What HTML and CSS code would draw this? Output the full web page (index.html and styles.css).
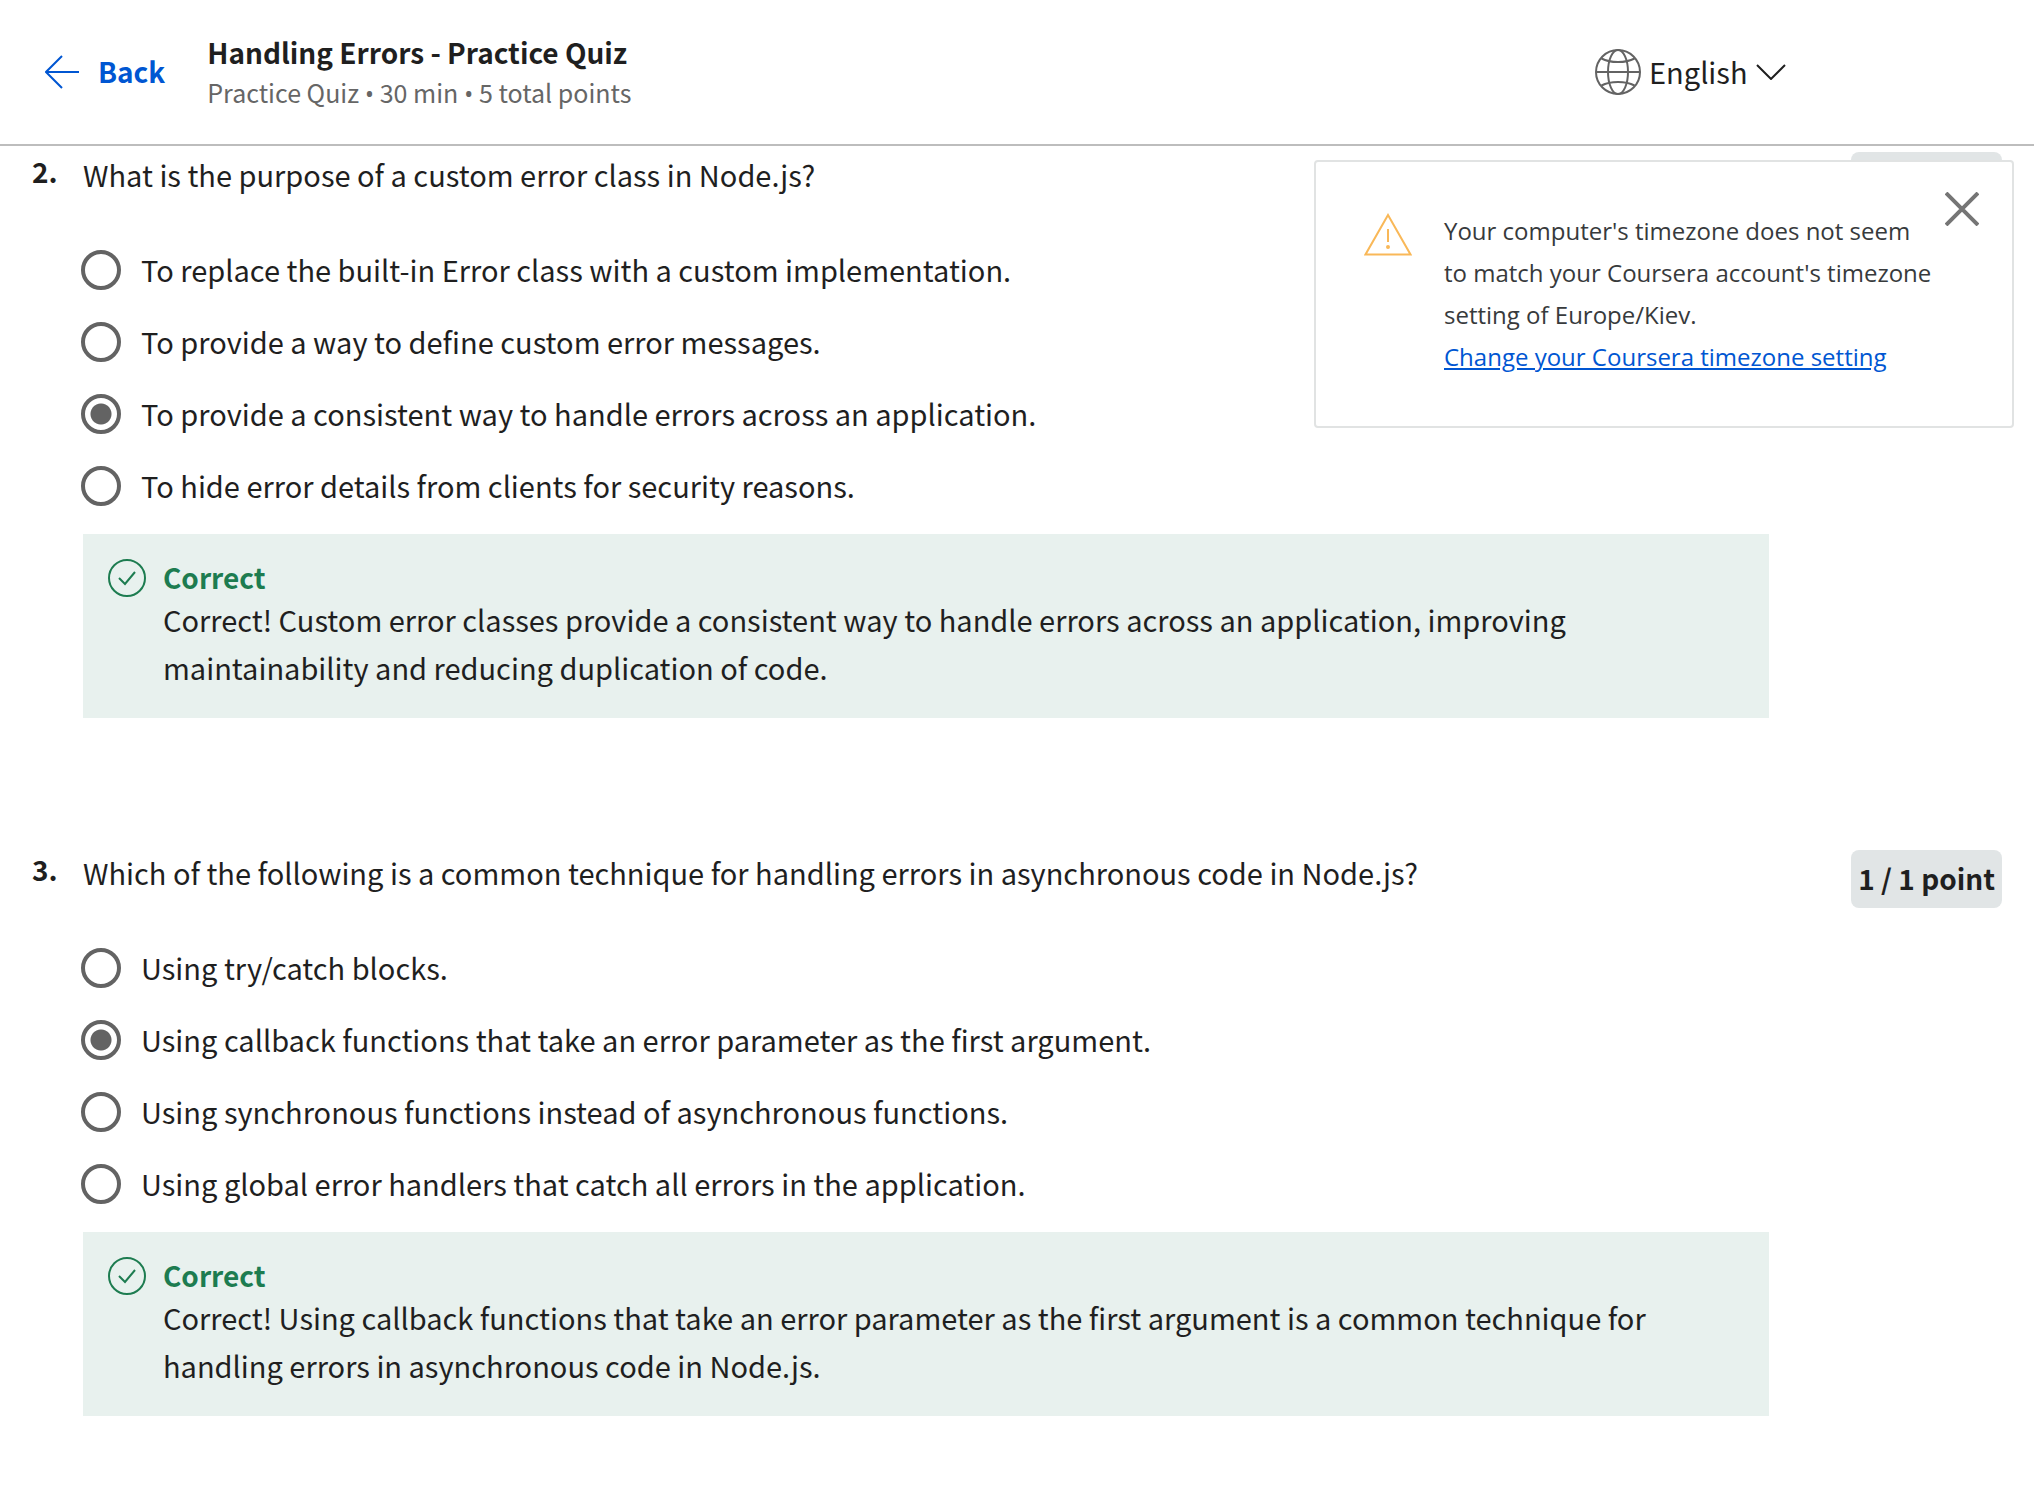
FILE: index.html
```html
<!DOCTYPE html>
<html lang="en">
<head>
  <meta charset="utf-8">
  <meta name="viewport" content="width=device-width, initial-scale=1">
  <title>Handling Errors - Practice Quiz</title>
  <link rel="stylesheet" href="styles.css">
</head>
<body>
  <header class="header">
    <a class="back" href="#">
      <svg class="back-icon" viewBox="0 0 34 34" aria-hidden="true"><path d="M34 17H1M17 1 1 17l16 16"/></svg>
      <span class="back-label">Back</span>
    </a>
    <div class="heading">
      <h1 class="title">Handling Errors - Practice Quiz</h1>
      <p class="subtitle">Practice Quiz <span class="dot">•</span> 30 min <span class="dot">•</span> 5 total points</p>
    </div>
    <label class="language">
      <svg class="globe-icon" viewBox="0 0 46 46" role="img" aria-label="Language">
        <circle cx="23" cy="23" r="22"/>
        <ellipse cx="23" cy="23" rx="10" ry="22"/>
        <path d="M1 23h44M6.500 9.500Q13 13 23 13t16.500-3.500M6.500 36.500Q13 33 23 33t16.500 3.500"/>
      </svg>
      <select class="language-select"><option>English</option></select>
      <svg class="chevron-icon" viewBox="0 0 30 16" aria-hidden="true"><path d="m1 1 14 14L29 1"/></svg>
    </label>
  </header>

  <aside class="notice">
    <svg class="warning-icon" viewBox="0 0 48 43" aria-hidden="true">
      <path d="M24 2 1.500 41.500h45z"/><path d="M24 16v13"/><circle cx="24" cy="34" r="1"/>
    </svg>
    <p class="notice-text">Your computer's timezone does not seem to match your Coursera account's timezone setting of Europe/Kiev.<br><a class="notice-link" href="#">Change your Coursera timezone setting</a></p>
    <button class="notice-close" type="button" aria-label="Close">
      <svg class="close-icon" viewBox="0 0 34 34" aria-hidden="true"><path d="m1 1 32 32M33 1 1 33"/></svg>
    </button>
  </aside>

  <main class="quiz">
    <section class="question">
      <span class="number">2.</span>
      <div class="body">
        <h2 class="prompt" id="q2">What is the purpose of a custom error class in Node.js?</h2>
        <div class="options" role="radiogroup" aria-labelledby="q2">
          <label class="option"><input class="radio" type="radio" name="q2"><span class="answer">To replace the built-in Error class with a custom implementation.</span></label>
          <label class="option"><input class="radio" type="radio" name="q2"><span class="answer">To provide a way to define custom error messages.</span></label>
          <label class="option"><input class="radio" type="radio" name="q2" checked><span class="answer">To provide a consistent way to handle errors across an application.</span></label>
          <label class="option"><input class="radio" type="radio" name="q2"><span class="answer">To hide error details from clients for security reasons.</span></label>
        </div>
        <div class="feedback">
          <svg class="check-icon" viewBox="0 0 38 38" aria-hidden="true"><circle cx="19" cy="19" r="18"/><path d="m11 19 6 6 10-12"/></svg>
          <div>
            <h3 class="verdict">Correct</h3>
            <p class="explanation">Correct! Custom error classes provide a consistent way to handle errors across an application, improving maintainability and reducing duplication of code.</p>
          </div>
        </div>
      </div>
      <span class="points">1 / 1 point</span>
    </section>

    <section class="question">
      <span class="number">3.</span>
      <div class="body">
        <h2 class="prompt" id="q3">Which of the following is a common technique for handling errors in asynchronous code in Node.js?</h2>
        <div class="options" role="radiogroup" aria-labelledby="q3">
          <label class="option"><input class="radio" type="radio" name="q3"><span class="answer">Using try/catch blocks.</span></label>
          <label class="option"><input class="radio" type="radio" name="q3" checked><span class="answer">Using callback functions that take an error parameter as the first argument.</span></label>
          <label class="option"><input class="radio" type="radio" name="q3"><span class="answer">Using synchronous functions instead of asynchronous functions.</span></label>
          <label class="option"><input class="radio" type="radio" name="q3"><span class="answer">Using global error handlers that catch all errors in the application.</span></label>
        </div>
        <div class="feedback">
          <svg class="check-icon" viewBox="0 0 38 38" aria-hidden="true"><circle cx="19" cy="19" r="18"/><path d="m11 19 6 6 10-12"/></svg>
          <div>
            <h3 class="verdict">Correct</h3>
            <p class="explanation">Correct! Using callback functions that take an error parameter as the first argument is a common technique for handling errors in asynchronous code in Node.js.</p>
          </div>
        </div>
      </div>
      <span class="points">1 / 1 point</span>
    </section>
  </main>
</body>
</html>
```

FILE: styles.css
```css
* {
  box-sizing: border-box;
}

body {
  margin: 0;
  background: #fff;
  color: #1f1f1f;
  font-family: "Noto Sans CJK SC", "Noto Sans", sans-serif;
  font-size: 29px;
  line-height: 48px;
}

h1, h2, h3, p {
  margin: 0;
}

svg {
  flex: none;
  fill: none;
  stroke: currentColor;
  stroke-width: 2;
}

/* Header */
.header {
  display: flex;
  align-items: center;
  padding: 32px 248px 32px 45px;
  border-bottom: 2px solid #bdbdbd;
}

.back {
  display: flex;
  align-items: center;
  gap: 19px;
  color: #0056d2;
  font-size: 28px;
  font-weight: 600;
  text-decoration: none;
}

.back-label {
  padding-bottom: 2px;
}

.back-icon {
  width: 34px;
  height: 34px;
}

.heading {
  margin-left: 42px;
}

.title {
  font-size: 28px;
  font-weight: 600;
  line-height: 40px;
}

.subtitle {
  color: #666;
  font-size: 25px;
  line-height: 40px;
}

.dot {
  font-family: "Open Sans", "Noto Sans", sans-serif;
  line-height: 1;
}

.language {
  display: flex;
  align-items: center;
  margin-left: auto;
}

.globe-icon {
  width: 46px;
  height: 46px;
  margin-right: 8px;
  color: #636363;
}

.language-select {
  appearance: none;
  padding: 0 0 2px;
  border: 0;
  background: none;
  color: inherit;
  font: inherit;
}

.chevron-icon {
  width: 30px;
  height: 16px;
  margin-left: 8px;
}

/* Timezone notice */
.notice {
  position: absolute;
  top: 160px;
  right: 20px;
  display: flex;
  align-items: flex-start;
  width: 700px;
  padding: 48px 33px 48px 48px;
  border: 2px solid #e1e3e3;
  border-radius: 4px;
  background: #fff;
}

.warning-icon {
  width: 48px;
  height: 43px;
  margin-top: 3px;
  color: #f9b858;
}

.notice-text {
  flex: 1;
  margin: 0 8px 0 32px;
  color: #373a3c;
  font-family: "Open Sans", "Noto Sans", sans-serif;
  font-size: 24px;
  line-height: 42px;
}

.notice-link {
  color: #0056d2;
}

.notice-close {
  display: flex;
  margin: -18px 0 0;
  padding: 0;
  border: 0;
  background: none;
  color: #757575;
}

.close-icon {
  width: 34px;
  height: 34px;
  stroke-width: 4;
}

/* Questions */
.quiz {
  padding: 6px 32px 96px;
}

.question {
  display: grid;
  grid-template-columns: 51px 1fr auto;
  align-items: start;
}

.question + .question {
  margin-top: 132px;
}

.number {
  font-size: 28px;
  font-weight: 600;
  line-height: 38px;
}

.prompt {
  font-size: inherit;
  font-weight: 400;
  line-height: 44px;
}

.options {
  margin: 38px 0 12px -2px;
}

.option {
  display: flex;
  align-items: center;
  gap: 20px;
  min-height: 72px;
}

.answer {
  padding-bottom: 2px;
}

.radio {
  appearance: none;
  flex: none;
  width: 40px;
  height: 40px;
  margin: 0;
  border: 4px solid #636363;
  border-radius: 50%;
}

.radio:checked {
  background: radial-gradient(circle, #636363 10px, transparent 11px);
}

.feedback {
  display: flex;
  align-items: flex-start;
  gap: 17px;
  padding: 25px 25px 27px;
  background: #e8f1ee;
}

.check-icon {
  width: 38px;
  height: 38px;
  color: #1d7c50;
}

.verdict {
  color: #1d7c50;
  font-size: 28px;
  font-weight: 600;
  line-height: 36px;
}

.points {
  margin-left: 82px;
  padding: 4px 7px 6px;
  border-radius: 8px;
  background: #e1e5e6;
  font-size: 28px;
  font-weight: 600;
}
```
